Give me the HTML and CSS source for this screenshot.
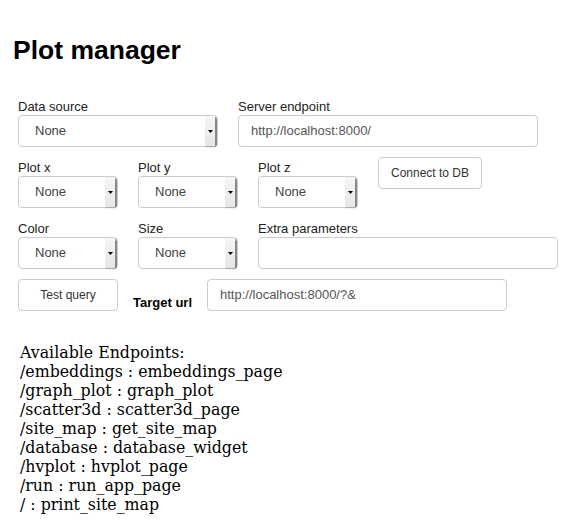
FILE: index.html
```html
<!DOCTYPE html>
<html>
<head>
<meta charset="utf-8">
<link rel="stylesheet" href="styles.css">
</head>
<body>
<div class="page">
  <h1 class="title">Plot manager</h1>

  <div class="row">
    <div class="widget w200">
      <div class="label">Data source</div>
      <div class="select"><span class="value">None</span><span class="arrow"><svg width="5" height="3" viewBox="0 0 5 3"><path d="M0 0H5L2.5 3Z" fill="#000"/></svg></span></div>
    </div>
    <div class="widget w300">
      <div class="label">Server endpoint</div>
      <div class="input">http://localhost:8000/</div>
    </div>
  </div>

  <div class="row">
    <div class="widget w100">
      <div class="label">Plot x</div>
      <div class="select"><span class="value">None</span><span class="arrow"><svg width="5" height="3" viewBox="0 0 5 3"><path d="M0 0H5L2.5 3Z" fill="#000"/></svg></span></div>
    </div>
    <div class="widget w100">
      <div class="label">Plot y</div>
      <div class="select"><span class="value">None</span><span class="arrow"><svg width="5" height="3" viewBox="0 0 5 3"><path d="M0 0H5L2.5 3Z" fill="#000"/></svg></span></div>
    </div>
    <div class="widget w100">
      <div class="label">Plot z</div>
      <div class="select"><span class="value">None</span><span class="arrow"><svg width="5" height="3" viewBox="0 0 5 3"><path d="M0 0H5L2.5 3Z" fill="#000"/></svg></span></div>
    </div>
    <div class="widget">
      <button class="btn btn-auto">Connect to DB</button>
    </div>
  </div>

  <div class="row">
    <div class="widget w100">
      <div class="label">Color</div>
      <div class="select"><span class="value">None</span><span class="arrow"><svg width="5" height="3" viewBox="0 0 5 3"><path d="M0 0H5L2.5 3Z" fill="#000"/></svg></span></div>
    </div>
    <div class="widget w100">
      <div class="label">Size</div>
      <div class="select"><span class="value">None</span><span class="arrow"><svg width="5" height="3" viewBox="0 0 5 3"><path d="M0 0H5L2.5 3Z" fill="#000"/></svg></span></div>
    </div>
    <div class="widget w300">
      <div class="label">Extra parameters</div>
      <div class="input"></div>
    </div>
  </div>

  <div class="row">
    <div class="widget w100">
      <button class="btn btn-full">Test query</button>
    </div>
    <div class="static">Target url</div>
    <div class="widget w300">
      <div class="input">http://localhost:8000/?&amp;</div>
    </div>
  </div>

  <div class="endpoints">
    Available Endpoints:<br>
    /embeddings : embeddings_page<br>
    /graph_plot : graph_plot<br>
    /scatter3d : scatter3d_page<br>
    /site_map : get_site_map<br>
    /database : database_widget<br>
    /hvplot : hvplot_page<br>
    /run : run_app_page<br>
    / : print_site_map
  </div>
</div>
</body>
</html>
```

FILE: styles.css
```css
html, body {
  margin: 0;
  padding: 0;
  background: #fff;
}

.page {
  padding: 0 8px;
  font-family: "Liberation Sans", Arial, sans-serif;
  color: #222;
}

.title {
  margin: 35px 5px 26px;
  font-size: 26.5px;
  line-height: 30px;
  font-weight: bold;
  color: #000;
}

.row {
  display: flex;
  align-items: flex-start;
}

.widget {
  flex-shrink: 0;
  margin: 5px 10px;
  display: flex;
  flex-direction: column;
}

.w100 { width: 100px; }
.w200 { width: 200px; }
.w300 { width: 300px; }

.label {
  font-size: 13px;
  line-height: 16px;
  padding-top: 3px;
  height: 16px;
  color: #222;
  white-space: nowrap;
}

.select {
  box-sizing: border-box;
  height: 32px;
  border: 1px solid #ccc;
  border-radius: 4px;
  background: #fff;
  display: flex;
  align-items: stretch;
}

.select .value {
  flex: 1;
  padding-left: 16px;
  font-size: 13px;
  line-height: 30px;
  color: #444;
}

.select .arrow {
  width: 10px;
  margin-right: 2px;
  background: linear-gradient(#f6f6f6, #e6e6e6);
  box-shadow: 2px 0 1px -0.5px #888, 1px 1px 1px #aaa;
  display: flex;
  align-items: center;
  justify-content: center;
}

.input {
  box-sizing: border-box;
  height: 32px;
  border: 1px solid #ccc;
  border-radius: 4px;
  background: #fff;
  padding-left: 12px;
  font-size: 13px;
  line-height: 30px;
  color: #555;
}

.btn {
  box-sizing: border-box;
  height: 32px;
  border: 1px solid #ccc;
  border-radius: 4px;
  background: #fff;
  font-family: "Liberation Sans", Arial, sans-serif;
  font-size: 12px;
  color: #333;
  padding: 0;
}

.btn-full { width: 100px; }
.btn-auto { padding: 0 12px; }

.static {
  flex-shrink: 0;
  align-self: flex-end;
  margin: 0 5px 6px 5px;
  font-size: 13px;
  line-height: 15px;
  font-weight: bold;
  color: #000;
  white-space: nowrap;
}

.endpoints {
  margin: 27px 10px 0 12px;
  font-family: "DejaVu Serif", serif;
  font-size: 15.8px;
  line-height: 19px;
  color: #000;
}
```
